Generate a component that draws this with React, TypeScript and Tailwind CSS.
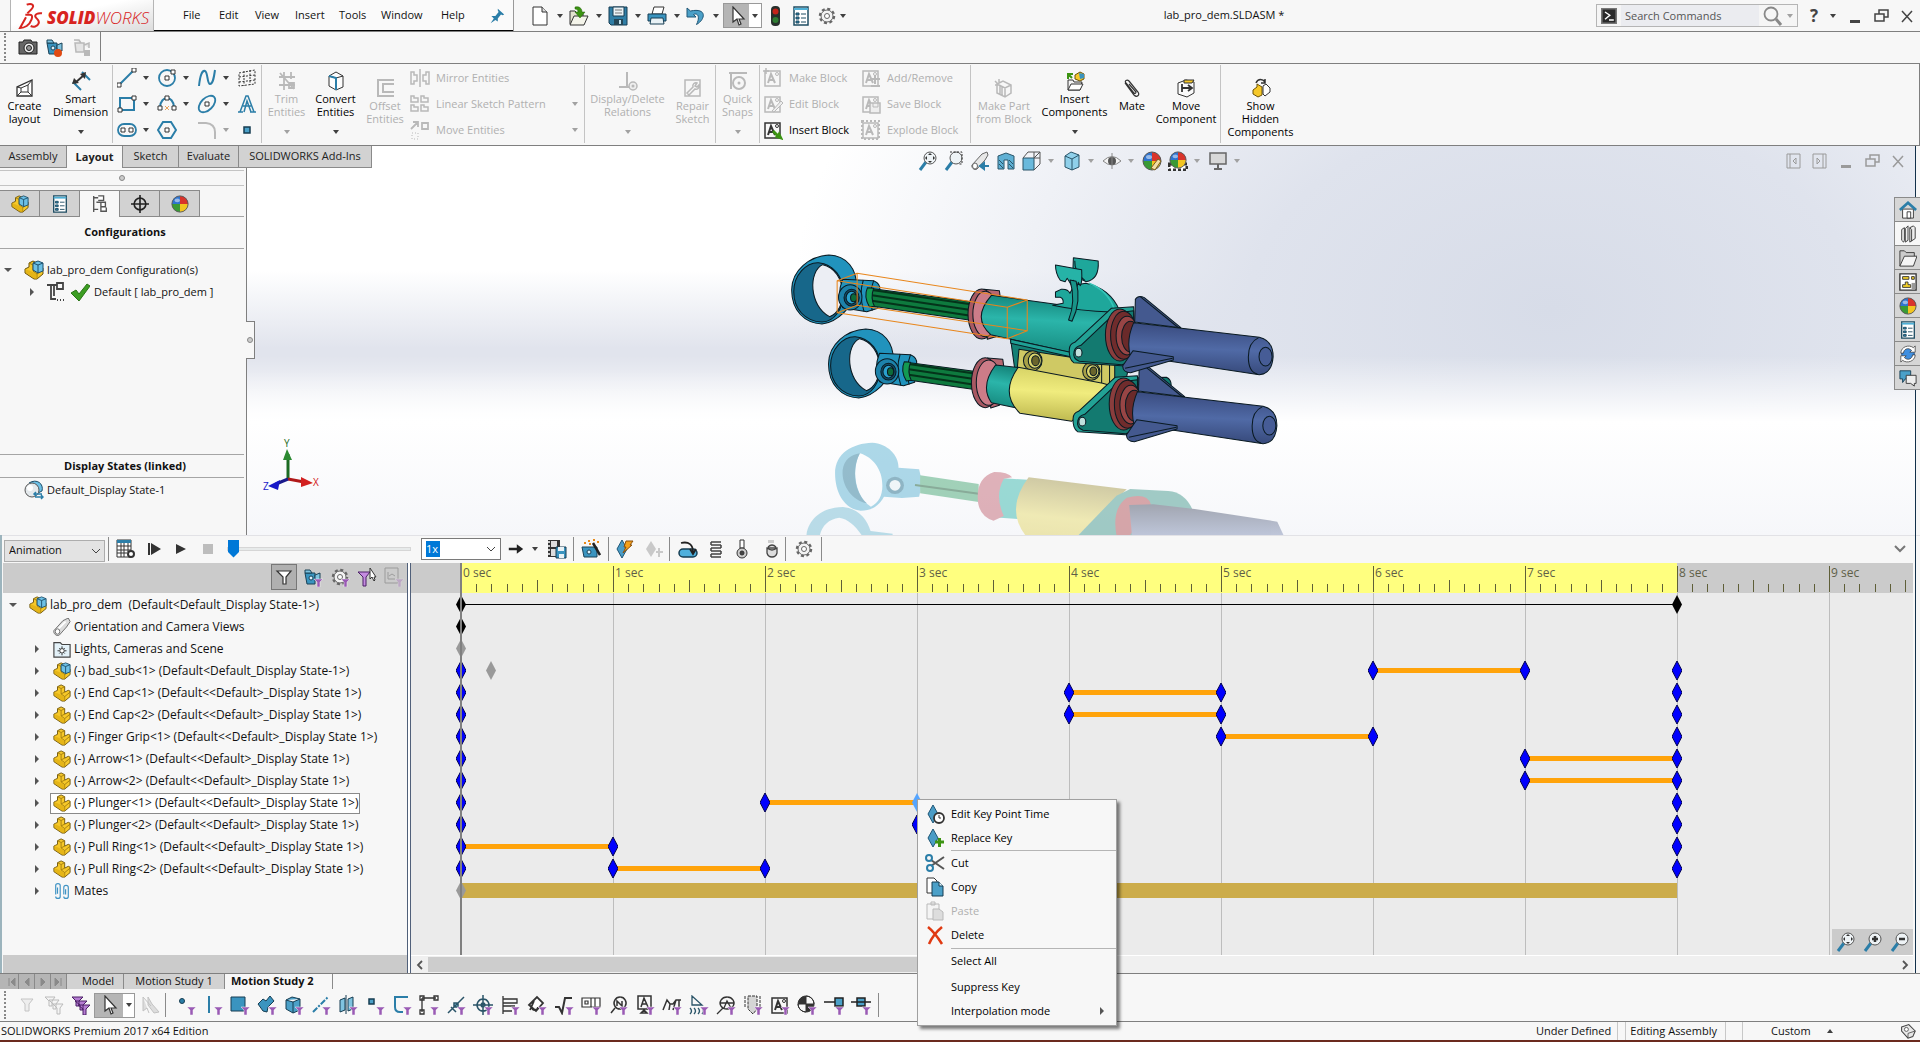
import React from 'react';

const B = '#2b7ea8';
const K = '#333';
const G = '#b9b9b9';
const P = '#9a5bb5';

const partCube = (
  <>
    <path d="M3 8l2-1V3l4-2 4 2v6l4-2 2 1v6l-6 5h-3l-9-6V9z" fill="#f6c829" stroke="#6b5208" />
    <path d="M9 5l-4-2M9 5l4-2M9 5v6l4-2M9 11l4 3v5M13 14l6-5" fill="none" stroke="#a07c10" />
    <path d="M1 9l8 3 4 3v4h-2l-9-6z" fill="#dba90c" opacity=".6" />
  </>
);

const asm = (
  <>
    {partCube}
    <path d="M9 3l5-2 5 2v8l-5 2-5-3z" fill="#6cc0e6" stroke="#1d4f6b" />
    <path d="M9 3l5 2 5-2M14 5v8" fill="none" stroke="#1d4f6b" />
  </>
);

const ball = (
  <>
    <path d="M10 1a9 9 0 0 1 9 9h-9z" fill="#d9342b" />
    <path d="M19 10a9 9 0 0 1-9 9v-9z" fill="#f2c521" />
    <path d="M10 19a9 9 0 0 1-9-9h9z" fill="#3a9a35" />
    <path d="M1 10a9 9 0 0 1 9-9v9z" fill="#2f74d0" />
    <ellipse cx="7" cy="6" rx="3" ry="2" fill="#fff" opacity=".5" />
    <circle cx="10" cy="10" r="9" fill="none" stroke="#555" />
  </>
);

const camcorder = (
  <>
    <path d="M2 6h10v11H4z" fill="#3a94bf" stroke="#1b4257" />
    <path d="M2 3h5l2 3H2zM12 8l5-2v8l-5-2z" fill="#7fc3e0" stroke="#1b4257" />
    <circle cx="8" cy="11" r="2" fill="#dff3fc" stroke="#1b4257" />
  </>
);

const glass = (
  <>
    <path d="M2 19l6-8" stroke={B} strokeWidth="3" />
    <circle cx="12" cy="7" r="6" fill="#eef3f6" stroke="#555" />
  </>
);

const gear = (
  <>
    <circle cx="10" cy="10" r="7" fill="none" stroke="#666" strokeWidth="2.500" strokeDasharray="3 2.500" />
    <circle cx="10" cy="10" r="6" fill="#f3f3f3" stroke="#666" />
    <circle cx="10" cy="10" r="2.500" fill="#fff" stroke="#666" />
  </>
);

const list = (
  <>
    <path d="M3 1h14v18H3z" fill="#fff" stroke="#1f4d63" strokeWidth="1.500" />
    <path d="M3 2h14v2H3z" fill="#4fb0d6" />
    <path d="M5 7h3v2H5zM5 11h3v2H5zM5 15h3v2H5z" fill={B} stroke="#1f4d63" />
    <path d="M10 8h5M10 12h5M10 16h5" stroke="#1f4d63" />
  </>
);

const cursor = <path d="M6 1v15l4-3 2 6 2-1-2-5h5z" fill="#fff" stroke={K} strokeWidth="1.200" />;

const key = <path d="M8 1l5 9-5 9-5-9z" fill="#4a9cc6" stroke="#1f5676" />;

const blockA = (c: string) => (
  <>
    <path d="M2 3h15v15H2z" fill="none" stroke={c} strokeWidth="1.500" />
    <path d="M5 15l3-9 4 9M6 12h5" fill="none" stroke={c} strokeWidth="2" />
    <circle cx="14" cy="6" r="1.500" fill="none" stroke={c} />
  </>
);

const icons: Record<string, React.ReactNode> = {
  asm,
  part: partCube,
  ball,
  camcorder,
  gear,
  list,
  cursor,
  pin: <path d="M11 1l8 7-2 1-2-1-4 5v4l-3-2-6 4 4-6-3-3h5l4-5-1-2z" fill={B} />,
  doc: (
    <>
      <path d="M3 1h9l5 5v13H3z" fill="#fff" stroke={K} />
      <path d="M12 1v5h5" fill="#ddd" stroke={K} />
    </>
  ),
  open: (
    <>
      <path d="M1 18V5h5l2 2h6v3" fill="#e3e3cf" stroke={K} />
      <path d="M1 19l4-9h14l-4 9z" fill="#f4f4ea" stroke={K} />
      <path d="M6 1c4-1 7 1 7 5h3l-5 6-5-6h3c0-2-1-3-3-3z" fill="#3c9412" stroke="#23600a" strokeWidth=".5" />
    </>
  ),
  save: (
    <>
      <path d="M1 1h18v18H3l-2-2z" fill="#2f7ea6" stroke="#163d52" />
      <path d="M5 1h11v9H5z" fill="#e9f2f6" stroke="#163d52" />
      <path d="M7 4h7M7 7h7" stroke="#777" />
      <path d="M6 13h9v6H6z" fill="#264757" />
      <path d="M11 14h2v4h-2z" fill="#bfe0ee" />
    </>
  ),
  print: (
    <>
      <path d="M5 8l2-7h10l-2 7z" fill="#fff" stroke={K} />
      <path d="M1 8h18v7H1z" fill="#3a94bf" stroke="#163d52" />
      <path d="M4 12h12l1 6H3z" fill="#e8f1f5" stroke="#163d52" />
    </>
  ),
  undo: <path d="M1 2v9h9L7.500 8.500c4-2 7 2 3 10 9-5 11-17-6-13.500z" fill="#4ba0c8" stroke="#1f5676" />,
  light: (
    <>
      <rect x="6" y="0" width="9" height="20" rx="4" fill="#27302c" />
      <circle cx="10.500" cy="5.500" r="3" fill="#c4241a" />
      <circle cx="10.500" cy="14" r="3" fill="#2f7d32" />
    </>
  ),
  search: (
    <>
      <circle cx="8" cy="8" r="6.500" fill="none" stroke="#888" strokeWidth="1.800" />
      <path d="M13 13l5 6" stroke="#888" strokeWidth="3" />
    </>
  ),
  prompt: (
    <>
      <path d="M1 1h18v18H1z" fill="#2a2a2a" stroke="#777" strokeWidth="2" />
      <path d="M5 5l6 4-6 5M10 15h6" fill="none" stroke="#fff" strokeWidth="1.800" />
    </>
  ),
  min: <path d="M5 14h10v3H5z" fill="currentColor" />,
  restore: <path d="M8 8V4h9v7h-4M4 8h9v7H4z" fill="none" stroke="currentColor" strokeWidth="1.500" />,
  close: <path d="M5 5l10 11M15 5L5 16" stroke="currentColor" strokeWidth="1.500" />,
  paneL: <path d="M3 3h13v14H3zM6 3v14M12 7l-3 3 3 3z" fill="none" stroke="currentColor" />,
  paneR: <path d="M3 3h13v14H3zM13 3v14M7 7l3 3-3 3z" fill="none" stroke="currentColor" />,
  camera: (
    <>
      <path d="M1 5h4l1-2h7l1 2h5v12H1z" fill="#666" stroke="#222" />
      <circle cx="11" cy="11" r="5" fill="#eee" stroke="#222" />
      <circle cx="11" cy="11" r="2.500" fill="#999" stroke="#222" />
    </>
  ),
  record: (
    <>
      {camcorder}
      <circle cx="13" cy="16" r="4" fill="#e04a13" />
    </>
  ),
  recStop: (
    <>
      <path d="M3 6h9v9H4zM2 3h5l2 3M12 8l5-2v5" fill="#e4e4e4" stroke={G} strokeWidth="1.500" />
      <path d="M12 13h6v6h-6z" fill={G} />
    </>
  ),
  layout: (
    <>
      <path d="M2 18V9l15-7v16z" fill="#fff" stroke={K} strokeWidth="1.300" />
      <path d="M6 14v-4l7-3v7zM2 18l4-4M17 18l-4-4M2 9l4 1M17 2l-4 5" fill="none" stroke={K} />
    </>
  ),
  smart: (
    <>
      <path d="M10 19l-8-8M19 9l-8-8" stroke={B} strokeWidth="2" />
      <path d="M4 12L13 4" stroke={K} strokeWidth="2" />
      <path d="M1 13l2-6 5 5zM15 1L9 3l5 5z" fill={K} />
    </>
  ),
  line: (
    <>
      <path d="M2 17L17 2" stroke={B} strokeWidth="2" />
      <path d="M0 15h4v4H0zM15 0h4v4h-4z" fill="#fff" stroke={K} />
    </>
  ),
  circle: (
    <>
      <circle cx="10" cy="10" r="8" fill="none" stroke={B} strokeWidth="1.800" />
      <path d="M8 8h4v4H8zM14 2h4v4h-4z" fill="#fff" stroke={K} />
    </>
  ),
  spline: <path d="M2 18C3 8 5 2 8 3s2 13 5 13 4-7 5-14" fill="none" stroke={B} strokeWidth="2" />,
  plane: <path d="M2 5l16-3v14L2 18zM7 3v15M13 2v15M2 9l16-2M2 14l16-2" fill="none" stroke={K} strokeDasharray="2 1.500" />,
  rect: (
    <>
      <path d="M3 4h14v12H3z" fill="none" stroke={B} strokeWidth="2" />
      <path d="M1 14h4v4H1zM15 2h4v4h-4z" fill="#fff" stroke={K} />
    </>
  ),
  arc: (
    <>
      <path d="M3 13C4 1 16 1 17 13" fill="none" stroke={B} strokeWidth="2" />
      <path d="M1 12h4v4H1zM15 12h4v4h-4zM8 2h4v4H8z" fill="#fff" stroke={K} />
      <path d="M8 12l4 4M12 12l-4 4" stroke="#e8a25a" />
    </>
  ),
  ellipse: (
    <>
      <ellipse cx="10" cy="10" rx="10" ry="6" transform="rotate(-45 10 10)" fill="none" stroke={B} strokeWidth="1.800" />
      <path d="M8 8h4v4H8z" fill="#fff" stroke={K} />
    </>
  ),
  text: <path d="M1 18h5M13 18h6M3 18L9 2h2l6 16M6 12h8M7 18l3-11 4 11" fill="none" stroke={B} strokeWidth="1.500" />,
  slot: (
    <>
      <rect x="1" y="4" width="18" height="12" rx="6" fill="none" stroke={B} strokeWidth="1.800" />
      <path d="M4 8h4v4H4zM12 8h4v4h-4z" fill="#fff" stroke={K} />
    </>
  ),
  hexagon: (
    <>
      <path d="M6 2h8l5 8-5 8H6l-5-8z" fill="none" stroke={B} strokeWidth="2" />
      <path d="M8 8h4v4H8z" fill="#fff" stroke={K} />
    </>
  ),
  fillet: <path d="M1 3h8q9 1 9 9v7" fill="none" stroke={G} strokeWidth="2" />,
  point: <path d="M7 7h6v6H7z" fill="#4ba0c8" stroke="#163d52" strokeWidth="1.500" />,
  trim: <path d="M2 6h16M2 14h16M7 1v18M14 1v7M3 2l14 16M12 12h5v5h-5z" fill="none" stroke={G} strokeWidth="1.800" />,
  convert: (
    <>
      <path d="M3 5l7-4 7 4v11l-7 3-7-4z" fill="#fdfdfd" stroke={K} />
      <path d="M3 5l7 2 7-2M10 7v12" fill="none" stroke={K} />
      <path d="M3 5l7 2v12" fill="none" stroke={B} strokeWidth="2" />
    </>
  ),
  offset: <path d="M19 2H3v16h16M19 6H8v8h11" fill="none" stroke={G} strokeWidth="2" />,
  mirror: <path d="M10 1v18M1 4l3 0v3h3v6H4v3H1zM19 4h-3v3h-3v6h3v3h3z" fill="none" stroke={G} strokeWidth="1.500" />,
  pattern: <path d="M1 2h3v2h4v4H1zM11 2h3v2h4v4h-7zM1 11h3v2h4v4H1zM11 11h3v2h4v4h-7z" fill="none" stroke={G} strokeWidth="1.500" />,
  move: (
    <>
      <path d="M1 9l7-7M3 2h5v5M12 3h6v6h-6z" fill="none" stroke={G} strokeWidth="1.800" />
      <path d="M2 13h6v6H2z" fill="none" stroke={G} strokeDasharray="1 2" />
    </>
  ),
  relations: (
    <>
      <path d="M9 1v15M1 16h11" stroke={G} strokeWidth="2" />
      <circle cx="15" cy="15" r="4" fill="#eee" stroke={G} strokeWidth="1.500" />
      <circle cx="15" cy="15" r="1.500" fill={G} />
    </>
  ),
  repair: <path d="M2 2h15v16H2zM4 15l6-6c-1-3 2-5 4-4l-2 3 2 1 2-2c1 3-2 5-4 4l-6 6z" fill="none" stroke={G} strokeWidth="1.500" />,
  snaps: (
    <>
      <path d="M1 2h18M3 2v16" stroke={G} strokeWidth="2" />
      <circle cx="11" cy="12" r="6" fill="none" stroke={G} strokeWidth="2" />
      <circle cx="11" cy="12" r="1.500" fill={G} />
    </>
  ),
  blockNew: (
    <>
      {blockA(G)}
      <path d="M0 3h6M3 0v6" stroke={G} strokeWidth="1.500" />
    </>
  ),
  blockEdit: (
    <>
      {blockA(G)}
      <path d="M9 17l9-10 2 2-9 9z" fill="#eee" stroke={G} />
    </>
  ),
  blockAdd: (
    <>
      {blockA(G)}
      <path d="M10 11h9M14 7v9M10 18h9" stroke={G} strokeWidth="2" />
    </>
  ),
  blockSave: (
    <>
      {blockA(G)}
      <path d="M9 9h10v10H9z" fill="#eee" stroke={G} strokeWidth="1.500" />
      <path d="M12 9v4h5V9" fill="none" stroke={G} />
    </>
  ),
  blockExplode: (
    <>
      {blockA(G)}
      <path d="M1 1h17v18H1z" fill="none" stroke={G} strokeWidth="2" strokeDasharray="2 2" />
    </>
  ),
  blockIns: (
    <>
      {blockA(K)}
      <path d="M11 11l4 4 1-2 3 6-6-2 1-1-4-4z" fill="#3c9412" stroke="#3c9412" strokeWidth="1.500" />
    </>
  ),
  makePart: <path d="M3 6l6-3 8 4v8l-6 4-8-4zM3 6l8 4 6-3M11 10v9M6 8v8M8 9v8M1 3l3 3M5 1v4M1 7h3" fill="none" stroke={G} strokeWidth="1.500" />,
  insComp: (
    <>
      <path d="M3 18V9h5l1 2h8l-2 8H3z" fill="#f4f4f4" stroke={K} />
      <path d="M3 19l3-6h12l-3 6z" fill="#fff" stroke={K} />
      <path d="M3 8V3h5M3 3l4 4" stroke="#3c9412" strokeWidth="2" fill="none" />
      <path d="M10 4l5-3 4 2v5l-4 2-5-2z" fill="#f6c829" stroke="#6b5208" />
      <path d="M14 2l5 1v4l-4 1z" fill="#3a94bf" />
    </>
  ),
  clip: <path d="M3 5l9 12c3 3 6 0 4-3L7 3C5 1 2 3 4 5l8 10c1 1 2 0 2-1L7 6" fill="none" stroke={K} strokeWidth="1.200" />,
  moveComp: (
    <>
      <path d="M2 5l8-3 8 2v11l-7 4-9-3z" fill="#fafafa" stroke={K} />
      <path d="M8 2h10l-2 3H8z" fill="#f6c829" stroke={K} />
      <path d="M6 10h9M12 7l4 3-4 3M6 6v8" fill="none" stroke={K} strokeWidth="1.800" />
    </>
  ),
  showHidden: (
    <>
      <path d="M2 12l4-3v-3l5 3v8l-4 2-5-3z" fill="#f6c829" stroke="#6b5208" />
      <path d="M12 8l3-2 4 4v4l-5 4-2-2z" fill="#fff" stroke={K} />
      <path d="M5 5c2-5 7-4 9-1M14 1v4h-4" fill="none" stroke={K} strokeWidth="1.500" />
    </>
  ),
  zoomFit: (
    <>
      {glass}
      <path d="M12 2l2 2h-4zM12 12l2-2h-4zM7 7l2-2v4zM17 7l-2-2v4z" fill={K} />
    </>
  ),
  zoomIn: (
    <>
      {glass}
      <path d="M12 4v6M9 7h6" stroke={K} strokeWidth="2.500" />
    </>
  ),
  zoomOut: (
    <>
      {glass}
      <path d="M9 7h6" stroke={K} strokeWidth="2.500" />
    </>
  ),
  zoomArea: (
    <>
      {glass}
      <path d="M6 1h12v12h-4" fill="none" stroke={K} strokeDasharray="2 1.500" />
    </>
  ),
  prevView: (
    <>
      <path d="M2 14L12 3l5-2 1 3-3 5-8 9c-3 2-6-2-5-4z" fill="#e7e7e7" stroke="#666" />
      <ellipse cx="5" cy="15" rx="2.500" ry="3" fill="#fff" stroke="#666" />
      <path d="M19 15h-6M14 12l-4 3 4 3z" stroke={B} fill={B} strokeWidth="2" />
    </>
  ),
  telescope: (
    <>
      <path d="M1 14L11 3l6-3 2 4-4 6-8 9c-3 2-7-2-6-5z" fill="#dcdcdc" stroke="#666" />
      <path d="M5 13l9-9" stroke="#fff" strokeWidth="2" />
      <ellipse cx="5" cy="15" rx="2.500" ry="3" fill="#fff" stroke="#666" />
    </>
  ),
  section: (
    <>
      <path d="M2 5l8-3 8 3v13h-6V9H8v9H2z" fill="#5fb0d4" stroke="#2a5468" />
      <path d="M3 9l4 4M3 13l4 4M13 9l4 4M13 13l4 4" stroke="#2a5468" />
    </>
  ),
  viewOrient: (
    <>
      <path d="M1 7h11v12H1z" fill="#6ab9dc" stroke="#2a5468" />
      <path d="M1 7l5-6h12v12l-6 6M12 7l6-6M12 1v6M18 7h-6" fill="none" stroke="#555" />
    </>
  ),
  display: (
    <>
      <path d="M3 5l6-4 8 3v12l-7 3-7-3z" fill="#8fd0ea" stroke="#2a5468" />
      <path d="M3 5l7 3 7-4M10 8v11" fill="none" stroke="#2a5468" />
    </>
  ),
  eye: (
    <>
      <path d="M1 10q9-9 18 0q-9 8-18 0z" fill="#f3f3f3" stroke="#888" />
      <circle cx="10" cy="10" r="4" fill="#555" />
      <path d="M10 2v16" stroke="#888" />
    </>
  ),
  ballEdit: (
    <>
      {ball}
      <path d="M9 17l7-9 3 2-6 9z" fill="#f3dfa5" stroke="#7a5d1c" />
    </>
  ),
  ballScene: (
    <>
      <path d="M1 13h18v6H1z" fill="#fff" stroke="#333" strokeDasharray="3 2" strokeWidth="3" />
      <g transform="translate(1 0) scale(.9)">{ball}</g>
    </>
  ),
  monitor: (
    <>
      <path d="M2 2h16v11H2z" fill="#d8d8d8" stroke="#666" strokeWidth="1.500" />
      <path d="M10 13v4M6 18h8" stroke="#666" strokeWidth="2" />
    </>
  ),
  config: <path d="M3 1v18M3 3h5M3 16h5M8 1l6 0v5H8M11 8h5v5h-5zM6 8l5 0M11 14v4h6v-4" fill="#fff" stroke="#555" strokeWidth="1.500" />,
  target: (
    <>
      <circle cx="10" cy="10" r="6.500" fill="none" stroke="#222" strokeWidth="1.800" />
      <path d="M10 0v20M0 10h20" stroke="#222" strokeWidth="1.800" />
    </>
  ),
  confItem: <path d="M1 3h10M5 3v14h5M8 3v11M11 1h6v6h-6zM11 18h1M14 18h1M17 18h1" fill="none" stroke="#444" strokeWidth="1.800" />,
  check: <path d="M1 11l5-3 3 4 8-10 3 2L9 19z" fill="#3c9e22" stroke="#2a7416" />,
  displayState: (
    <>
      <path d="M5 3c8-5 15 1 13 8l-4 2" fill="#6cc0e6" stroke="#1d4f6b" />
      <circle cx="8" cy="10" r="7" fill="#e4e9ec" stroke="#555" />
      <ellipse cx="6" cy="8" rx="3" ry="3" fill="#fff" />
      <path d="M11 14h7M11 17h7M12 12l-2 2 2 2M17 15l2 2-2 2" fill="none" stroke={B} strokeWidth="1.500" />
    </>
  ),
  home: (
    <>
      <path d="M4 9h12v10H4z" fill="#fff" stroke={K} />
      <path d="M9 12h4v7H9z" fill="#fff" stroke={K} />
      <path d="M1 10l9-8 9 8" fill="none" stroke="#2b7ea8" strokeWidth="3" />
    </>
  ),
  books: <path d="M3 5l3-2v14l-1 2-2-2zM7 4l3-3v16l-3 2zM12 3l4-2 2 2v12l-6 4zM12 3l2 2v13" fill="#eee" stroke={K} />,
  folder: (
    <>
      <path d="M1 19V2h5l2 2h9v4" fill="#ccc" stroke={K} />
      <path d="M1 19L6 8h14l-4 11z" fill="#f5f5f5" stroke={K} />
    </>
  ),
  palette: (
    <>
      <path d="M1 1h18v18H1z" fill="#fff" stroke={K} strokeWidth="1.500" />
      <path d="M4 4h7v3H4zM14 4h3v3h-3zM4 16v-3h3v-3h3v3h3v3z" fill="#f6d229" stroke={K} />
      <path d="M14 11h4v7h-4z" fill="#999" />
    </>
  ),
  globe: (
    <>
      <circle cx="10" cy="10" r="7" fill="#3f8fe0" stroke="#1d4f8b" />
      <path d="M2 9C2 2 11-1 16 3l2-2v7h-6l2-2c-4-4-9-1-9 3zM18 11c0 7-9 10-14 6l-2 2v-7h6l-2 2c4 4 9 1 9-3z" fill="#fff" stroke={K} strokeWidth=".8" />
    </>
  ),
  forum: (
    <>
      <path d="M1 2h12v9H7l-3 4v-4H1z" fill="#4ba0c8" stroke="#163d52" />
      <path d="M8 7h11v9h-2v3l-4-3H8z" fill="#eee" stroke={K} />
    </>
  ),
  calc: (
    <>
      <path d="M1 1h14v17H1z" fill="#fff" stroke={K} />
      <path d="M1 1h14v3H1z" fill={B} />
      <path d="M5 4v14M8 4v14M12 4v9M1 7h14M1 11h14M1 14h10" stroke={K} />
      <circle cx="15" cy="15" r="3" fill="#fff" stroke={K} strokeWidth="2" />
    </>
  ),
  playStart: <path d="M4 4h2v12H4zM7 4l10 6-10 6z" fill="#333" />,
  play: <path d="M5 5l10 5-10 5z" fill="#333" />,
  stop: <path d="M5 5h10v10H5z" fill="#bdbdbd" />,
  arrow: <path d="M1 8.500h10V4l8 6-8 6v-4.500H1z" fill="#222" />,
  film: (
    <>
      <path d="M1 1h12v17H1z" fill="#333" />
      <path d="M4 2h6v6H4zM4 10h6v7H4z" fill="#ddd" />
      <path d="M1 3h2M1 7h2M1 11h2M1 15h2" stroke="#fff" strokeWidth="1.500" />
      <path d="M9 8h10v11H9z" fill="#3a94bf" stroke="#163d52" />
      <path d="M11 8h6v4h-6zM12 15h5v4h-5z" fill="#e9f2f6" />
    </>
  ),
  wizard: (
    <>
      <path d="M1 8h15v10H3z" fill="#3a94bf" stroke="#1b4257" />
      <circle cx="8" cy="13" r="2" fill="#dff3fc" stroke="#1b4257" />
      <path d="M12 4l7 12" stroke="#222" strokeWidth="2.500" />
      <path d="M3 4h2M7 2h2M12 1h2M8 5h2M16 3h2" stroke="#e88a1a" strokeWidth="2" />
    </>
  ),
  autoKey: (
    <>
      {key}
      <path d="M12 2h7l-3 4h2l-9 8 3-6h-2z" fill="#f5a11b" stroke="#8a4f08" />
    </>
  ),
  addKey: <path d="M7 2l5 8-5 8-5-8zM12 12h2v-3h2v3h3v2h-3v4h-2v-4h-2z" fill="#c9c9c9" />,
  motor: (
    <>
      <rect x="1" y="10" width="18" height="8" rx="4" fill="#4fb0dc" stroke="#163d52" strokeWidth="1.500" />
      <path d="M3 4c8-2 12 2 12 9M12 10l3 5 3-5" fill="none" stroke="#222" strokeWidth="1.800" />
    </>
  ),
  spring: <path d="M5 3h10M5 6h10M5 9h10M5 12h10M5 15h10M5 18h10M5 3v3M15 6v3M5 9v3M15 12v3M5 15v3" stroke="#444" strokeWidth="1.500" />,
  contact: (
    <>
      <path d="M8 1h4v8H8z" fill="#fff" stroke={K} />
      <circle cx="10" cy="14" r="5" fill="#ccc" stroke={K} />
      <circle cx="10" cy="14" r="2" fill="#444" stroke={K} />
    </>
  ),
  gravity: (
    <>
      <path d="M6 1h6v3H6z" fill="#ccc" />
      <path d="M5 9h10v5q-1 4-5 4t-5-4zM5 9q5 4 10 0M6 8q4-4 8 0" fill="#ddd" stroke="#444" strokeWidth="1.300" />
    </>
  ),
  funnel: <path d="M3 4h14l-5 6v7H9v-7z" fill="#fff" stroke={K} strokeWidth="1.200" />,
  lights: (
    <>
      <path d="M1 3h7l2 2h9v14H1z" fill="#e3f1f8" stroke="#444" strokeWidth="1.300" />
      <circle cx="10" cy="12" r="2.500" fill="#fff" stroke="#222" />
      <path d="M10 7v2M10 15v2M5 12h2M13 12h2M7 9l1 1M13 15l-1-1M13 9l-1 1M7 15l1-1" stroke="#222" />
    </>
  ),
  mates: <path d="M3 14V4c0-3 5-3 5 0v12c0 3-5 3-5 0M5 13V6M12 14V6c0-3 5-3 5 0v10c0 3-5 3-5 0M14 14V8" fill="none" stroke="#3f93c4" strokeWidth="1.300" />,
  keyTime: (
    <>
      {key}
      <circle cx="14" cy="14" r="5" fill="#fff" stroke={K} strokeWidth="1.800" />
      <path d="M14 11v3h2" fill="none" stroke={K} />
    </>
  ),
  keyAdd: (
    <>
      {key}
      <path d="M10 14h9M14.500 10v9" stroke="#3c9412" strokeWidth="3" />
    </>
  ),
  cut: (
    <>
      <path d="M6 7l13 9M6 13l13-9" stroke="#555" strokeWidth="2" />
      <circle cx="4" cy="5" r="3" fill="none" stroke={B} strokeWidth="2" />
      <circle cx="5" cy="15" r="3" fill="none" stroke={B} strokeWidth="2" />
    </>
  ),
  copy: (
    <>
      <path d="M2 1h7l3 3v12H2z" fill="#fff" stroke={K} />
      <path d="M7 5h7l4 4v10H7z" fill="#4ba0c8" stroke="#163d52" />
      <path d="M14 5v4h4" fill="#dff3fc" stroke="#163d52" />
    </>
  ),
  paste: (
    <>
      <path d="M2 3h12v15H2zM6 1h4v3H6z" fill="#f4f4f4" stroke={G} />
      <path d="M8 8h6l4 3v8H8z" fill="#ddd" stroke={G} />
    </>
  ),
  del: <path d="M3 2c5 4 9 9 14 17M17 2C11 7 7 12 4 19" fill="none" stroke="#e03a12" strokeWidth="2.500" />,
  tag: (
    <>
      <path d="M2 5l9-3 8 8-3 7-6 2-8-9z" fill="#e8e8e8" stroke="#444" strokeWidth="1.300" />
      <circle cx="8" cy="8" r="2.500" fill="#fff" stroke="#444" />
      <path d="M10 19v-6l9-3" fill="none" stroke="#444" />
    </>
  ),
  selGray: <path d="M3 2v14l4-3 2 5M8 2v8l6 8 5-1-7-8zM3 2l8 9" fill="#ddd" stroke="#c2c2c2" />,
  filterOff: <path d="M4 4h12l-4 5v7H8V9z" fill="#eee" stroke="#c4c4c4" />,
  filterStackOff: <path d="M1 2h10L8 6v5H5V6zM5 5h10l-3 4v5H9V9zM9 9h10l-3 4v6h-3v-6z" fill="#f4f4f4" stroke="#bbb" />,
  filterStack: <path d="M1 2h11L8 6v5H5V6zM4 6h12l-4 4v5H9v-5zM7 10h12l-4 4v6h-3v-6z" fill="#b57cd2" stroke="#4b1f66" />,
};

// glyphs of the selection-filter toolbar; each one gets the purple funnel badge
const filterGlyphs: React.ReactNode[] = [
  <circle cx="6" cy="6" r="2.500" fill={B} stroke="#163d52" />,
  <path d="M6 1v17" stroke={B} strokeWidth="2" />,
  <path d="M1 2h14v14H1z" fill="#3a94bf" stroke="#163d52" />,
  <path d="M1 9l5-5 3 2 4-5 4 5-6 6-1 5-4-1z" fill="#3a94bf" stroke="#163d52" />,
  <path d="M2 5l6-3 8 2v11l-7 3-7-4zM2 5l7 2 7-3M9 7v11" fill="#4ba0c8" stroke="#163d52" />,
  <path d="M2 17L17 2" stroke={B} strokeWidth="2" strokeDasharray="6 1.500 2 1.500" />,
  <path d="M2 5l5-2v12l-5 2zM10 4l5-2v12l-5 2zM8 0v19" fill="#7fc3e0" stroke="#163d52" />,
  <path d="M4 4h5v5H4z" fill="#4ba0c8" stroke="#163d52" strokeWidth="1.500" />,
  <path d="M16 2H3v10q0 5 5 5h3" fill="none" stroke={B} strokeWidth="2" />,
  <path d="M3 3h14M3 3v14M1 1h4v4H1zM15 1h4v4h-4zM1 15h4v4H1z" fill="#fff" stroke={K} strokeWidth="1.300" />,
  <path d="M2 18L18 2M5 12l5 5M8 8h4v4H8z" fill="#7fc3e0" stroke="#2a5468" strokeWidth="1.500" />,
  <path d="M10 0v20M0 10h20M10 4a6 6 0 1 0 .1 0M10 8a2 2 0 1 0 .1 0" fill="none" stroke="#2a5468" strokeWidth="1.500" />,
  <path d="M3 1v18M3 4h14v4H3M3 11h12M3 16h9" fill="none" stroke={K} strokeWidth="1.300" />,
  <path d="M2 10L10 2l6 6-7 8zM7 6l-4 9M5 12a3 3 0 1 0 6 0" fill="#fff" stroke={K} strokeWidth="1.800" />,
  <path d="M1 12h4l3 6 3-15h7" fill="none" stroke={K} strokeWidth="2" />,
  <path d="M1 3h18v9H1zM10 3v9M14 3v9M4 6h3v3H4z" fill="#fff" stroke={K} strokeWidth="1.200" />,
  <path d="M3 18l4-5M12 2a6 6 0 1 0 .1 0M9 11V6l5 5V6" fill="none" stroke={K} strokeWidth="1.500" />,
  <path d="M3 1h13v13H3zM6 12l3-9 4 9M7 9h5M6 18h6l-3-3z" fill="none" stroke={K} strokeWidth="1.500" />,
  <path d="M1 15L5 5l3 4h3l3-4h5M8 9l-1 6M14 5l-3 10M17 5v7" fill="none" stroke={K} strokeWidth="1.500" />,
  <path d="M3 1v9h10zM1 13q3 3 0 6M5 13q3 3 0 6M9 13q3 3 0 6M13 13q3 3 0 6" fill="none" stroke="#2a5468" strokeWidth="1.300" />,
  <path d="M1 19l6-6M11 2a7 6 0 1 0 .1 0M4 8h14M8 13l3-7 4 7" fill="none" stroke={K} strokeWidth="1.300" />,
  <path d="M2 1v12M17 1v12M5 1h9v13l-4 5-5-5z" fill="#d5d5d5" stroke={K} strokeDasharray="3 1" />,
  <g>{blockA(K)}</g>,
  <path d="M9 9V1a8 8 0 0 1 8 8zM9 9v8a8 8 0 0 1-8-8zM9 1a8 8 0 1 0 .1 0" fill="#333" fillRule="evenodd" stroke={K} />,
  <path d="M0 7h11M11 3h8v8h-8z" fill="#4ba0c8" stroke="#222" strokeWidth="1.500" />,
  <path d="M0 7h20M6 3h8v8H6z" fill="#4ba0c8" stroke="#222" strokeWidth="1.500" />,
];

const badge = <path d="M11 12h9l-3 3v5h-3v-5z" fill={P} stroke="#f7f7f7" strokeWidth=".5" />;

const Svg = ({ children, size = 'h-5 w-5' }: { children: React.ReactNode; size?: string }) => (
  <svg viewBox="0 0 20 20" fill="none" className={`${size} shrink-0`} aria-hidden="true">
    {children}
  </svg>
);

const Icon = ({ name, size }: { name: string; size?: string }) => <Svg size={size}>{icons[name]}</Svg>;

const Caret = ({ dim, up }: { dim?: boolean; up?: boolean }) => (
  <svg viewBox="0 0 6 4" className={`h-1 w-1.5 shrink-0 ${up ? 'rotate-180' : ''} ${dim ? 'text-neutral-400' : 'text-neutral-700'}`}>
    <path d="M0 0h6L3 4z" fill="currentColor" />
  </svg>
);

const Sep = () => <div className="h-6 w-px shrink-0 bg-[#8a8a8a]" />;

const IconButton = ({ name, label, className = 'w-[27px]' }: { name: string; label: string; className?: string }) => (
  <button type="button" aria-label={label} className={`flex shrink-0 items-center justify-center ${className}`}>
    <Icon name={name} />
  </button>
);

/* ---------- title bar ---------- */

const quick = [
  ['doc', 'New'],
  ['open', 'Open'],
  ['save', 'Save'],
  ['print', 'Print'],
  ['undo', 'Undo'],
];

const TitleBar = () => (
  <header className="flex h-8 shrink-0 items-stretch border-b border-[#7f7f7f]">
    <div className="ml-2.5 flex w-36 items-center border-x border-[#b5b5b5] bg-linear-to-br from-white from-40% to-[#dcdcdc] pl-1">
      <svg viewBox="0 0 70 84" className="h-7 w-8 shrink-0" fill="none" stroke="#d8241f" strokeWidth="6">
        <path d="M22 8c16-6 26 2 14 14L24 34" />
        <path d="M18 38h14c14 0 2 26-10 34-8 5-14 6-20 6l18-32" />
        <path d="M68 34c-14-2-22 4-20 10s14 10 10 20-16 12-24 8" />
      </svg>
      <div className="pt-1 text-[17px] text-[#d8241f] italic">
        <span className="font-extrabold">SOLID</span>
        <span className="font-light">WORKS</span>
      </div>
    </div>
    <nav className="flex w-[360px] items-center border-r border-[#999] bg-[#fafafa] pl-[29px] shadow-[inset_0_-1px_0_#000]">
      <button type="button" className="w-9 text-left">File</button>
      <button type="button" className="w-9 text-left">Edit</button>
      <button type="button" className="w-10 text-left">View</button>
      <button type="button" className="w-11 text-left">Insert</button>
      <button type="button" className="w-[42px] text-left">Tools</button>
      <button type="button" className="w-[60px] text-left">Window</button>
      <button type="button" className="w-12 text-left">Help</button>
      <button type="button" aria-label="Pin menu">
        <Icon name="pin" size="h-4 w-4" />
      </button>
    </nav>
    <div className="flex items-center pl-4">
      {quick.map(([name, label]) => (
        <button key={name} type="button" aria-label={label} className="flex w-[39px] items-center gap-[7px]">
          <Icon name={name} />
          <Caret />
        </button>
      ))}
      <button type="button" aria-label="Select" className="-ml-0.5 flex h-[25px] w-[39px] items-center border border-[#999] bg-white">
        <span className="flex h-full w-[25px] items-center justify-center bg-[#b5b5b5]">
          <Icon name="cursor" />
        </span>
        <span className="flex flex-1 justify-center">
          <Caret />
        </span>
      </button>
      <IconButton name="light" label="Rebuild" className="w-[26px]" />
      <IconButton name="list" label="File properties" className="w-[26px]" />
      <IconButton name="gear" label="Options" className="w-[26px]" />
      <Caret />
    </div>
    <h1 className="flex-1 self-center pl-1.5 text-center">lab_pro_dem.SLDASM *</h1>
    <div className="my-1 flex w-[202px] items-center border border-[#b5b5b5] bg-[#f5f5f5] pl-1">
      <Icon name="prompt" size="h-4 w-4" />
      <input aria-label="Search Commands" placeholder="Search Commands" className="ml-1 h-full w-[138px] bg-[#ebecf0] pl-1 placeholder:text-[#555]" />
      <button type="button" aria-label="Search" className="flex flex-1 items-center justify-center gap-1">
        <Icon name="search" />
        <Caret dim />
      </button>
    </div>
    <div className="flex items-center text-[#444]">
      <button type="button" className="w-8 text-[17px] font-bold">?</button>
      <Caret />
      <IconButton name="min" label="Minimize" className="ml-1.5 w-[26px]" />
      <IconButton name="restore" label="Restore" className="w-[26px]" />
      <IconButton name="close" label="Close" className="w-[26px]" />
    </div>
  </header>
);

/* ---------- command manager ---------- */

interface BigProps {
  icon: string;
  lines: string[];
  width: string;
  disabled?: boolean;
  caret?: boolean;
}

const Big: React.FC<BigProps> = ({ icon, lines, width, disabled, caret }) => (
  <button
    type="button"
    disabled={disabled}
    className={`flex shrink-0 flex-col items-center leading-[13px] ${width} ${caret ? 'pt-1.5' : 'pt-[13px]'} ${disabled ? 'text-[#b0b0b0]' : 'text-black'}`}
  >
    <Icon name={icon} />
    <span className="mt-px whitespace-pre-line">{lines.join('\n')}</span>
    {caret && (
      <span className="mt-3 flex">
        <Caret dim={disabled} />
      </span>
    )}
  </button>
);

const Small = ({ icon, label, disabled = true, caret }: { icon: string; label: string; disabled?: boolean; caret?: boolean }) => (
  <button type="button" disabled={disabled} className={`flex h-[26px] items-center gap-1.5 ${disabled ? 'text-[#b0b0b0]' : 'text-black'}`}>
    <Icon name={icon} />
    <span className="flex-1 text-left">{label}</span>
    {caret && <Caret dim />}
  </button>
);

const Group = ({ children }: { children: React.ReactNode }) => (
  <div className="my-0.5 flex shrink-0 items-start border-r border-[#c4c4c4]">{children}</div>
);

const sketchTools: [string, string, boolean][] = [
  ['line', 'Line', true],
  ['circle', 'Circle', true],
  ['spline', 'Spline', true],
  ['plane', 'Plane', false],
  ['rect', 'Rectangle', true],
  ['arc', 'Arc', true],
  ['ellipse', 'Ellipse', true],
  ['text', 'Text', false],
  ['slot', 'Slot', true],
  ['hexagon', 'Polygon', false],
  ['fillet', 'Fillet', true],
  ['point', 'Point', false],
];

const Ribbon = () => (
  <section className="-mt-px flex h-[83px] shrink-0 border-r border-b border-[#7f7f7f]">
    <Group>
      <Big icon="layout" lines={['Create', 'layout']} width="w-[49px]" />
      <Big icon="smart" lines={['Smart', 'Dimension']} width="w-[63px]" caret />
    </Group>
    <Group>
      <div className="grid w-[148px] grid-cols-[40px_40px_40px_20px] pl-1">
        {sketchTools.map(([name, label, caret]) => (
          <button key={name} type="button" aria-label={label} className="flex h-[26px] items-center gap-1.5">
            <Icon name={name} />
            {caret && <Caret dim={name === 'fillet'} />}
          </button>
        ))}
      </div>
    </Group>
    <Group>
      <Big icon="trim" lines={['Trim', 'Entities']} width="w-[49px]" disabled caret />
      <Big icon="convert" lines={['Convert', 'Entities']} width="w-[49px]" caret />
      <Big icon="offset" lines={['Offset', 'Entities']} width="w-[50px]" disabled />
      <div className="flex w-[174px] flex-col pr-1.5">
        <Small icon="mirror" label="Mirror Entities" />
        <Small icon="pattern" label="Linear Sketch Pattern" caret />
        <Small icon="move" label="Move Entities" caret />
      </div>
    </Group>
    <Group>
      <Big icon="relations" lines={['Display/Delete', 'Relations']} width="w-[85px]" disabled caret />
      <Big icon="repair" lines={['Repair', 'Sketch']} width="w-[45px]" disabled />
    </Group>
    <Group>
      <Big icon="snaps" lines={['Quick', 'Snaps']} width="w-[43px]" disabled caret />
    </Group>
    <Group>
      <div className="flex w-[98px] flex-col pl-[3px]">
        <Small icon="blockNew" label="Make Block" />
        <Small icon="blockEdit" label="Edit Block" />
        <Small icon="blockIns" label="Insert Block" disabled={false} />
      </div>
      <div className="flex w-28 flex-col pl-[3px]">
        <Small icon="blockAdd" label="Add/Remove" />
        <Small icon="blockSave" label="Save Block" />
        <Small icon="blockExplode" label="Explode Block" />
      </div>
    </Group>
    <Group>
      <Big icon="makePart" lines={['Make Part', 'from Block']} width="w-[66px]" disabled />
      <Big icon="insComp" lines={['Insert', 'Components']} width="w-[75px]" caret />
      <Big icon="clip" lines={['Mate']} width="w-10" />
      <Big icon="moveComp" lines={['Move', 'Component']} width="w-[68px]" />
    </Group>
    <div className="my-0.5 flex items-start">
      <Big icon="showHidden" lines={['Show', 'Hidden', 'Components']} width="w-[79px]" />
    </div>
  </section>
);

/* ---------- left configuration panel ---------- */

const Expander = ({ open }: { open?: boolean }) => (
  <svg viewBox="0 0 8 8" className="h-2 w-2 shrink-0" fill="#555">
    {open ? <path d="M0 2h8L4 6z" /> : <path d="M2 0l4 4-4 4z" />}
  </svg>
);

const cmdTabs: [string, string][] = [
  ['Assembly', 'w-[67px]'],
  ['Layout', 'w-[56px]'],
  ['Sketch', 'w-[56px]'],
  ['Evaluate', 'w-[60px]'],
  ['SOLIDWORKS Add-Ins', 'w-[133px]'],
];

const panelTabs = ['asm', 'list', 'config', 'target', 'ball'];

const ConfigPanel = () => (
  <aside className="relative z-10 flex w-[247px] shrink-0 flex-col">
    <div className="flex h-[22px] w-max shrink-0 text-[#222]">
      {cmdTabs.map(([label, width]) => (
        <button
          key={label}
          type="button"
          className={`${width} border-r border-[#8a8a8a] whitespace-nowrap ${label === 'Layout' ? 'bg-[#f7f7f7] font-bold' : 'border-b bg-[#d2d2d2]'}`}
        >
          {label}
        </button>
      ))}
    </div>
    <div className="flex flex-1 flex-col border-r border-[#7f7f7f] bg-[#f7f7f7]">
      <div className="mt-0.5 mr-0.5 flex h-4 items-center justify-center border-y border-[#c4c4c4]">
        <span className="h-1.5 w-1.5 rounded-full border border-[#888] bg-[#ccc]" />
      </div>
      <div className="mt-1 mr-0.5 flex h-[27px] border-b border-[#a5a5a5]">
        {panelTabs.map((name) => (
          <button
            key={name}
            type="button"
            aria-label={name}
            className={`-mb-px flex w-10 items-center justify-center border-t border-r border-[#8a8a8a] ${name === 'config' ? 'bg-[#f7f7f7]' : 'border-b bg-[#d2d2d2]'}`}
          >
            <Icon name={name} size="h-[18px] w-[18px]" />
          </button>
        ))}
      </div>
      <h2 className="mr-0.5 flex h-8 items-center justify-center border-b border-[#a5a5a5] pl-1.5 text-[11px] font-bold">Configurations</h2>
      <ul className="pt-2.5">
        <li className="flex h-[22px] items-center pl-1">
          <Expander open />
          <span className="ml-3 flex">
            <Icon name="asm" />
          </span>
          <span className="ml-[3px]">lab_pro_dem Configuration(s)</span>
        </li>
        <li className="flex h-[22px] items-center pl-7">
          <Expander />
          <span className="ml-2.5 flex gap-1">
            <Icon name="confItem" />
            <Icon name="check" />
          </span>
          <span className="ml-1">Default [ lab_pro_dem ]</span>
        </li>
      </ul>
      <div className="mt-auto mr-0.5">
        <h2 className="flex h-6 items-center justify-center border-y border-[#a5a5a5] pl-1.5 text-[11px] font-bold">Display States (linked)</h2>
        <div className="flex h-[57px] items-start gap-[3px] pt-0.5 pl-6">
          <Icon name="displayState" />
          <span className="leading-5">Default_Display State-1</span>
        </div>
      </div>
    </div>
    <button
      type="button"
      aria-label="Collapse panel"
      className="absolute top-[175px] -right-2 flex h-[38px] w-[9px] items-center justify-center border border-l-0 border-[#7f7f7f] bg-[#f7f7f7]"
    >
      <span className="h-1.5 w-1.5 rounded-full border border-[#888] bg-[#ccc]" />
    </button>
  </aside>
);

/* ---------- 3D model ---------- */

const Handle = () => (
  <g>
    <path d="M92 150C92 90 145 48 200 45c52 2 82 42 80 95-2 60-60 108-100 112-50-2-88-40-88-102z" fill="#2193bd" />
    <path d="M98 155C98 105 135 66 170 68c45 4 72 45 72 92 0 46-25 84-62 86-50-2-82-40-82-91z" fill="#17678a" />
    <path d="M182 74c-42 20-40 124 20 156 26-10 38-40 38-70 0-42-25-80-58-86z" fill="#eceef4" />
    <path d="M240 118l90 4q20 8 18 28l-6 55-32 10-70-12q-18-40 0-85z" fill="#2193bd" />
    <path d="M300 120q-14 45 2 94M330 122q-16 44-4 90" fill="none" />
    <ellipse cx="262" cy="172" rx="34" ry="38" fill="#1d82aa" />
    <ellipse cx="266" cy="173" rx="22" ry="25" fill="#124f6a" />
    <ellipse cx="266" cy="173" rx="16" ry="19" fill="#2aa0cc" />
    <ellipse cx="272" cy="173" rx="9" ry="12" fill="#0d6b3a" />
    <path d="M318 145q-12 25 0 52l294 44v-56z" fill="#0e7a3e" />
    <path d="M325 150l287 43M325 166l287 44M325 182l287 45" strokeWidth="6" fill="none" stroke="#04331a" />
    <path d="M312 143l18 2q-10 28 2 54l-14 2q-18-30-6-58z" fill="#139a52" />
  </g>
);

const Collar = () => (
  <g>
    <path d="M650 148l45 4q14 70-10 138l-25 8z" fill="#b76670" />
    <ellipse cx="644" cy="222" rx="40" ry="75" fill="#a85862" />
    <ellipse cx="654" cy="222" rx="36" ry="68" fill="#cc7c88" />
  </g>
);

const Bullet = () => (
  <g>
    <path d="M898 330q0-18 16-23l106-102 65-5 6 166-30 12-150-10q-14-10-13-38z" fill="#22a295" />
    <path d="M912 334q4-14 20-18l98-96 55-8v150l-34 12-124-10q-20-8-15-30z" fill="#137a70" />
    <ellipse cx="925" cy="338" rx="10" ry="13" fill="#bfe0dd" />
    <ellipse cx="1045" cy="285" rx="42" ry="78" fill="#8a3d3d" />
    <ellipse cx="1056" cy="286" rx="38" ry="72" fill="#702c2c" />
    <ellipse cx="1066" cy="287" rx="32" ry="58" fill="#984545" />
    <ellipse cx="1076" cy="290" rx="26" ry="46" fill="#6a2a2a" />
    <path d="M1090 178q8-14 26-5l106 90-134-17z" fill="#44598f" />
    <path d="M1104 170l112 94" fill="none" />
    <path d="M1085 248l365 44q40 10 40 58-4 52-40 54l-375-58q-12-46 10-98z" fill="url(#blueBody)" />
    <path d="M1448 293q-30 14-30 58t26 51" fill="none" />
    <ellipse cx="1468" cy="350" rx="19" ry="28" fill="#465c96" />
    <path d="M1053 378l30-46 117 18v10l-124 38q-22 0-23-20z" fill="#44598f" />
    <path d="M1060 385l138-30" fill="none" />
  </g>
);

const Model = () => (
  <svg viewBox="0 0 1568 885" preserveAspectRatio="none" className="absolute bottom-0 left-[513px] h-[295px] w-[540px]" stroke="#0a1a22" strokeWidth="3" strokeLinejoin="round">
    <defs>
      <linearGradient id="teal" x1="0" y1="0" x2="-.15" y2="1">
        <stop offset="0" stopColor="#178a80" />
        <stop offset=".35" stopColor="#2bb5aa" />
        <stop offset="1" stopColor="#128277" />
      </linearGradient>
      <linearGradient id="blueBody" x1="0" y1="0" x2="-.1" y2="1">
        <stop offset="0" stopColor="#3a4c80" />
        <stop offset=".45" stopColor="#506aa6" />
        <stop offset="1" stopColor="#324372" />
      </linearGradient>
      <linearGradient id="yellowBody" x1="0" y1="0" x2="-.1" y2="1">
        <stop offset="0" stopColor="#d8d467" />
        <stop offset=".4" stopColor="#f0ec7e" />
        <stop offset="1" stopColor="#b9b34a" />
      </linearGradient>
      <linearGradient id="yellowDim" x1="0" y1="0" x2="-.2" y2="1">
        <stop offset="0" stopColor="#a89c50" />
        <stop offset=".6" stopColor="#e8dc70" />
        <stop offset="1" stopColor="#e0d264" />
      </linearGradient>
      <linearGradient id="blueDim" x1="0" y1="0" x2="0" y2="1">
        <stop offset="0" stopColor="#4c5568" />
        <stop offset="1" stopColor="#8794b8" />
      </linearGradient>
    </defs>

    {/* floor reflection */}
    <g opacity=".5" stroke="none">
      <path
        fillRule="evenodd"
        d="M218 700c0-60 50-90 108-92 45 2 78 40 76 75l60 5q12 40 0 82l-50 4-52-4c-14 26-34 42-68 42-44-4-74-50-74-112zM290 640c-26 50-14 130 32 160 26-14 35-40 33-68 0-40-25-80-65-92z"
        fill="#5fb4d4"
      />
      <path d="M240 690c4-30 24-46 50-50-26 50-14 120 20 150-40-8-74-50-70-100z" fill="#2f7d9c" />
      <ellipse cx="392" cy="736" rx="26" ry="26" fill="#27718e" />
      <ellipse cx="392" cy="736" rx="16" ry="16" fill="#e8f2f5" />
      <path d="M465 706l170 26v54l-170-26z" fill="#4aa877" />
      <path d="M450 735l185 26" stroke="#1a5e38" strokeWidth="6" />
      <path d="M668 712l120 8-20 118-90-6z" fill="#3cb9ae" />
      <path d="M680 696q40 0 52 16l-24 4q-28 50 0 112l-30 14q-46-14-46-72t48-74z" fill="#c46a78" />
      <path d="M780 712l285 36-140 137H770q-58-80 10-173z" fill="url(#yellowDim)" />
      <path d="M925 885l110-118 40-20 110 6q60 4 80 84l-80 48z" fill="#4a9c90" />
      <path d="M1035 885q-14-80 30-112 60-16 70 20l-60 92z" fill="#b4555a" />
      <path d="M1072 795l70-2 120 14 240 38 18 40h-440z" fill="url(#blueDim)" />
      <path d="M135 885c8-60 60-84 106-84 44 4 70 36 80 72l64 8v4h-90c-20-30-40-48-65-52-30 4-50 24-56 52z" fill="#7cc0d6" />
    </g>

    {/* saddle block between the two tubes */}
    <path d="M728 300l352 40-20 90-320-40z" fill="#158075" />
    <path d="M752 328l278 44v60l-40 6-243-52z" fill="#cfc964" />
    <path d="M992 368v66M1015 372v56" fill="none" />
    <ellipse cx="792" cy="362" rx="27" ry="30" fill="#a8a148" />
    <ellipse cx="798" cy="362" rx="19" ry="23" fill="#dcd66e" />
    <ellipse cx="800" cy="362" rx="11" ry="15" fill="#6a652c" />
    <ellipse cx="962" cy="394" rx="25" ry="27" fill="#a8a148" />
    <ellipse cx="966" cy="394" rx="18" ry="20" fill="#dcd66e" />
    <ellipse cx="968" cy="394" rx="10" ry="13" fill="#6a652c" />

    {/* lower assembly */}
    <g transform="translate(107 222)">
      <Handle />
    </g>
    <g transform="translate(10 206)">
      <Collar />
    </g>
    <path d="M684 375l70 8-12 120-70-15q-34-50 12-113z" fill="url(#teal)" />
    <path d="M750 382l245 48 20 6-110 108-150-24q-60-60-5-138z" fill="url(#yellowBody)" />
    <path d="M1040 415l140-3q14 6 14 24l-60 10z" fill="#137a70" />
    <g transform="translate(11 207)">
      <Bullet />
    </g>

    {/* upper assembly */}
    <Handle />
    <Collar />
    <path d="M672 166l408 58-150 120-260-60q-56-50 2-118z" fill="url(#teal)" />
    <path d="M728 298l180 40v14l-180-42z" fill="#1fa095" />
    <path d="M850 196l30-6q2-14-8-18l-14 0v-16l16-8q20-2 26 12l12-24 34-6q72 16 98 82l-24 4q-90-2-170-20z" fill="#1ea79b" />
    <path d="M955 130q56 22 74 78" fill="none" stroke="#35c4b8" strokeWidth="5" />
    <path d="M910 53l72 10q4 56-36 62l-38-20z" fill="#1ea79b" />
    <path d="M914 62q-2 34 30 60" fill="none" />
    <path d="M858 75l76 14q2 40-4 48 l-6-10-4 14-10-20-6 14-12-20-6 10-14-4q-14-20-14-46z" fill="#26b3a7" />
    <path d="M900 120q18 64-4 120l10 4q28-60 12-120z" fill="#189388" />
    <Bullet />

    {/* selection box */}
    <g fill="none" stroke="#e8861c">
      <path d="M224 122l494 80v94L224 218zM282 100l494 80v92l-494-76zM224 122l58-22M718 202l58-22M718 296l58-24M224 218l58-22" />
    </g>
  </svg>
);

const Triad = () => (
  <svg viewBox="0 0 60 56" className="absolute bottom-10 left-[14px] h-14 w-[60px] overflow-visible" fontFamily="Open Sans, sans-serif" fontSize="10">
    <path d="M27 40V15" stroke="#1c6b22" strokeWidth="3" />
    <path d="M22 21l4-11 5 11z" fill="#2c8a32" />
    <path d="M27 40l16 3" stroke="#b01818" strokeWidth="3" />
    <path d="M40 38l12 6-12 4z" fill="#d22020" />
    <path d="M27 40l-12 5" stroke="#1a1a8c" strokeWidth="3" />
    <path d="M19 41l-12 6 10 4z" fill="#1818c8" />
    <text x="23" y="8" fill="#1c6b22">Y</text>
    <text x="52" y="47" fill="#d22020">X</text>
    <text x="2" y="51" fill="#1a1ac8">Z</text>
  </svg>
);

const viewTools: [string, boolean][] = [
  ['zoomFit', false],
  ['zoomArea', false],
  ['prevView', false],
  ['section', false],
  ['viewOrient', true],
  ['display', true],
  ['eye', true],
  ['ballEdit', false],
  ['ballScene', true],
  ['monitor', true],
];

const taskTabs = ['home', 'books', 'folder', 'palette', 'ball', 'list', 'globe', 'forum'];

const Viewport = () => (
  <main className="relative flex flex-1 items-stretch bg-[linear-gradient(to_bottom,transparent_54%,#fff_71%,#f6f7fa_100%),radial-gradient(ellipse_760px_500px_at_78%_42%,#d7dce8_0%,#dfe3ed_40%,transparent_100%),linear-gradient(to_bottom,#fff_0%,#fff_32%,#e1e4ed_52%,#e1e4ed_58%,#fff_74%)]">
    <div className="flex h-[30px] flex-1 items-center pl-[668px]">
      {viewTools.map(([name, caret]) => (
        <button key={name} type="button" aria-label={name} className={`flex items-center gap-1.5 pl-[3px] ${caret ? 'w-10' : 'w-[26px]'}`}>
          <Icon name={name} />
          {caret && <Caret dim />}
        </button>
      ))}
      <div className="mr-1 ml-auto flex text-[#9a9a9a]">
        <IconButton name="paneL" label="Tile left" className="w-[26px]" />
        <IconButton name="paneR" label="Tile right" className="w-[26px]" />
        <IconButton name="min" label="Minimize document" className="w-[26px]" />
        <IconButton name="restore" label="Restore document" className="w-[26px]" />
        <IconButton name="close" label="Close document" className="w-[26px]" />
      </div>
    </div>
    <div className="w-[5px] border-l border-[#12304a] bg-[#f7f7f7]" />
    <Model />
    <Triad />
    <div className="absolute top-[51px] right-0 flex w-[26px] flex-col border-t border-l border-[#8a8a8a]">
      {taskTabs.map((name) => (
        <button
          key={name}
          type="button"
          aria-label={name}
          className={`flex h-6 items-center justify-center border-b border-[#8a8a8a] ${name === 'books' ? 'bg-[#f7f7f7]' : 'bg-[#d6d6d6]'}`}
        >
          <Icon name={name} size="h-[18px] w-[18px]" />
        </button>
      ))}
    </div>
  </main>
);

/* ---------- motion study ---------- */

const StudyToolbar = () => (
  <div className="flex h-7 shrink-0 items-center border-t border-[#e2e2e6] pb-0.5">
    <div className="relative mt-1 ml-1">
      <select aria-label="Study type" className="h-[22px] w-[101px] appearance-none border border-[#adadad] bg-[#e3e3e3] pl-1">
        <option>Animation</option>
      </select>
      <svg viewBox="0 0 10 6" className="pointer-events-none absolute top-2 right-1 h-1.5 w-2.5" fill="none" stroke="#444">
        <path d="M1 1l4 4 4-4" />
      </svg>
    </div>
    <div className="mx-[3px]">
      <Sep />
    </div>
    <IconButton name="calc" label="Calculate" className="w-7" />
    <IconButton name="playStart" label="Play from start" />
    <IconButton name="play" label="Play" />
    <IconButton name="stop" label="Stop" />
    <input
      type="range"
      aria-label="Playback position"
      defaultValue={0}
      className="ml-1.5 h-5 w-[184px] appearance-none bg-transparent [&::-webkit-slider-runnable-track]:h-1 [&::-webkit-slider-runnable-track]:border [&::-webkit-slider-runnable-track]:border-[#d6d6d6] [&::-webkit-slider-runnable-track]:bg-[#e7eaea] [&::-webkit-slider-thumb]:-mt-2 [&::-webkit-slider-thumb]:h-[18px] [&::-webkit-slider-thumb]:w-[11px] [&::-webkit-slider-thumb]:appearance-none [&::-webkit-slider-thumb]:bg-[#0078d7] [&::-webkit-slider-thumb]:[clip-path:polygon(0_0,100%_0,100%_70%,50%_100%,0_70%)]"
    />
    <div className="ml-2.5 flex h-[22px] w-20 items-center border border-[#7a7a7a] bg-white pl-1">
      <input aria-label="Playback speed" defaultValue="1x" className="w-3.5 bg-[#0078d7] leading-4 text-white" />
      <button type="button" aria-label="Speeds" className="mr-1 ml-auto">
        <svg viewBox="0 0 10 6" className="h-1.5 w-2.5" fill="none" stroke="#444">
          <path d="M1 1l4 4 4-4" />
        </svg>
      </button>
    </div>
    <button type="button" aria-label="Playback mode" className="ml-[7px] flex items-center gap-2">
      <Icon name="arrow" size="h-4 w-4" />
      <Caret />
    </button>
    <IconButton name="film" label="Save animation" className="mr-0.5 ml-[5px] w-7" />
    <Sep />
    <IconButton name="wizard" label="Animation wizard" className="w-[34px]" />
    <Sep />
    <IconButton name="autoKey" label="Autokey" className="w-[30px]" />
    <IconButton name="addKey" label="Add key" className="w-[30px]" />
    <Sep />
    <IconButton name="motor" label="Motor" className="w-9" />
    <IconButton name="spring" label="Spring" className="w-5" />
    <IconButton name="contact" label="Contact" className="w-8" />
    <IconButton name="gravity" label="Gravity" />
    <Sep />
    <IconButton name="gear" label="Study properties" className="w-[35px]" />
    <Sep />
    <button type="button" aria-label="Collapse study" className="mr-3.5 ml-auto">
      <svg viewBox="0 0 12 8" className="h-2 w-3" fill="none" stroke="#777" strokeWidth="2">
        <path d="M1 1l5 5 5-5" />
      </svg>
    </button>
  </div>
);

interface Track {
  label: string;
  icon: string;
  depth: number;
  leaf?: boolean;
  keys: [number, string][];
  bar?: [number, number];
}

const BLUE = '#0000ff';
const GRAY = '#999999';

const tracks: Track[] = [
  { label: 'lab_pro_dem  (Default<Default_Display State-1>)', icon: 'asm', depth: 0, keys: [[0, '#000'], [8, '#000']] },
  { label: 'Orientation and Camera Views', icon: 'telescope', depth: 1, leaf: true, keys: [[0, '#000']] },
  { label: 'Lights, Cameras and Scene', icon: 'lights', depth: 1, keys: [[0, GRAY]] },
  { label: '(-) bad_sub<1> (Default<Default_Display State-1>)', icon: 'asm', depth: 1, keys: [[0, BLUE], [0.2, GRAY], [6, BLUE], [7, BLUE], [8, BLUE]], bar: [6, 7] },
  { label: '(-) End Cap<1> (Default<<Default>_Display State 1>)', icon: 'part', depth: 1, keys: [[0, BLUE], [4, BLUE], [5, BLUE], [8, BLUE]], bar: [4, 5] },
  { label: '(-) End Cap<2> (Default<<Default>_Display State 1>)', icon: 'part', depth: 1, keys: [[0, BLUE], [4, BLUE], [5, BLUE], [8, BLUE]], bar: [4, 5] },
  { label: '(-) Finger Grip<1> (Default<<Default>_Display State 1>)', icon: 'part', depth: 1, keys: [[0, BLUE], [5, BLUE], [6, BLUE], [8, BLUE]], bar: [5, 6] },
  { label: '(-) Arrow<1> (Default<<Default>_Display State 1>)', icon: 'part', depth: 1, keys: [[0, BLUE], [7, BLUE], [8, BLUE]], bar: [7, 8] },
  { label: '(-) Arrow<2> (Default<<Default>_Display State 1>)', icon: 'part', depth: 1, keys: [[0, BLUE], [7, BLUE], [8, BLUE]], bar: [7, 8] },
  { label: '(-) Plunger<1> (Default<<Default>_Display State 1>)', icon: 'part', depth: 1, keys: [[0, BLUE], [2, BLUE], [3, '#55a5ff'], [8, BLUE]], bar: [2, 3] },
  { label: '(-) Plunger<2> (Default<<Default>_Display State 1>)', icon: 'part', depth: 1, keys: [[0, BLUE], [3, BLUE], [8, BLUE]] },
  { label: '(-) Pull Ring<1> (Default<<Default>_Display State 1>)', icon: 'part', depth: 1, keys: [[0, BLUE], [1, BLUE], [8, BLUE]], bar: [0, 1] },
  { label: '(-) Pull Ring<2> (Default<<Default>_Display State 1>)', icon: 'part', depth: 1, keys: [[0, BLUE], [1, BLUE], [2, BLUE], [8, BLUE]], bar: [1, 2] },
  { label: 'Mates', icon: 'mates', depth: 1, keys: [[0, GRAY]] },
];

const SEC = 152;

const MotionTree = () => (
  <div className="flex w-[404px] shrink-0 flex-col">
    <div className="flex h-[30px] items-center justify-end bg-[#cbcbcb] pb-0.5">
      <button type="button" aria-label="No filter" className="mr-0.5 flex h-[26px] w-[26px] items-center justify-center border border-[#777] bg-[#b0b0b0]">
        <Icon name="funnel" />
      </button>
      {['camcorder', 'gear', 'selected', 'results'].map((name) => (
        <button key={name} type="button" aria-label={`Filter ${name}`} className={`flex w-[27px] items-center justify-center ${name === 'results' ? 'opacity-30' : ''}`}>
          <Svg>
            {name === 'selected' && (
              <>
                <path d="M1 5h12l-4 5v9H6v-9z" fill="#c48be0" stroke="#4b1f66" />
                <path d="M13 1v11l2-2 2 4 1-1-1-3h2z" fill="#fff" stroke={K} />
              </>
            )}
            {name === 'results' && <path d="M1 1h13v15H1zM4 5v7h7M5 9l3-2 3 2" stroke={K} />}
            {icons[name]}
            {name !== 'selected' && badge}
          </Svg>
        </button>
      ))}
    </div>
    <ul className="flex-1 pt-px text-[12px]">
      {tracks.map((t) => (
        <li key={t.label} className={`flex h-[22px] items-center ${t.depth ? 'pl-[30px]' : 'pl-1.5'}`}>
          <span className="flex w-[17px] shrink-0">{!t.leaf && <Expander open={!t.depth} />}</span>
          <span
            className={`flex h-[21px] items-center gap-[3px] border pr-px pl-0.5 whitespace-pre ${t.label.includes('Plunger<1>') ? 'border-[#8a8a8a] bg-white' : 'border-transparent'}`}
          >
            <Icon name={t.icon} size="h-[18px] w-[18px]" />
            {t.label}
          </span>
        </li>
      ))}
    </ul>
    <div className="h-[18px] bg-[#cbcbcb]" />
  </div>
);

const Ruler = () => (
  <div className="relative h-[30px] overflow-hidden bg-[#cbcbcb]">
    <div className="absolute inset-y-0 left-[50px] bg-[#ffff7f]" style={{ width: 8 * SEC }} />
    {Array.from({ length: 96 }, (_, i) => {
      const major = i % 10 === 0;
      return (
        <div
          key={i}
          className={`absolute bottom-px w-px bg-[#5f5f38] ${major ? 'top-[3px]' : i % 5 === 0 ? 'h-3' : 'h-2'}`}
          style={{ left: 50 + Math.round((i * SEC) / 10) }}
        >
          {major && <span className="absolute -top-[3px] left-0.5 text-[12px] leading-5 font-medium whitespace-nowrap text-[#5f5f48]">{i / 10} sec</span>}
        </div>
      );
    })}
  </div>
);

const TrackRow = ({ track, index }: { track: Track; index: number }) => (
  <div className="relative ml-[50px] h-[22px]">
    {index === 0 && <div className="absolute top-2.5 left-0 h-px bg-black" style={{ width: 8 * SEC }} />}
    {track.label === 'Mates' && <div className="absolute top-[3px] left-0 h-[15px] bg-[#ccac4a]" style={{ width: 8 * SEC }} />}
    {track.bar && (
      <div className="absolute top-2 h-[5px] bg-[#ffa30a]" style={{ left: track.bar[0] * SEC, width: (track.bar[1] - track.bar[0]) * SEC }} />
    )}
    {track.keys.map(([t, color]) => (
      <svg key={t} viewBox="0 0 10 19" className="absolute top-px h-[19px] w-2.5 -translate-x-1/2" style={{ left: t * SEC }}>
        <path d="M5 0l5 9.500-5 9.500-5-9.500z" fill={color} stroke={color === BLUE ? '#00004d' : 'none'} />
      </svg>
    ))}
  </div>
);

const Timeline = () => (
  <div className="flex min-w-0 flex-1 flex-col">
    <Ruler />
    <div className="relative flex-1 bg-[#ebebeb] pt-px">
      {Array.from({ length: 9 }, (_, i) => (
        <div key={i} className="absolute inset-y-0 w-px bg-[#bdbdbd]" style={{ left: 50 + (i + 1) * SEC }} />
      ))}
      {tracks.map((t, i) => (
        <TrackRow key={t.label} track={t} index={i} />
      ))}
      <div className="absolute -top-[30px] bottom-0 left-[49px] w-0.5 bg-[#808080]" />
      <div className="absolute right-0 bottom-0 flex h-[26px] w-[81px] items-center bg-[#cbcbcb]">
        <IconButton name="zoomFit" label="Zoom to fit" />
        <IconButton name="zoomIn" label="Zoom in" />
        <IconButton name="zoomOut" label="Zoom out" />
      </div>
    </div>
    <div className="flex h-[18px] items-center border-t border-white bg-[#f0f0f0]">
      <button type="button" aria-label="Scroll left" className="flex w-[17px] justify-center">
        <svg viewBox="0 0 8 10" className="h-2.5 w-2" fill="none" stroke="#555" strokeWidth="1.800">
          <path d="M6 1L2 5l4 4" />
        </svg>
      </button>
      <div className="h-[15px] w-[40%] bg-[#cdcdcd]" />
      <button type="button" aria-label="Scroll right" className="ml-auto flex w-[17px] justify-center">
        <svg viewBox="0 0 8 10" className="h-2.5 w-2" fill="none" stroke="#555" strokeWidth="1.800">
          <path d="M2 1l4 4-4 4" />
        </svg>
      </button>
    </div>
  </div>
);

const MenuItem = ({ icon, label, disabled, sub }: { icon?: string; label: string; disabled?: boolean; sub?: boolean }) => (
  <button type="button" role="menuitem" disabled={disabled} className={`flex h-6 w-full items-center ${disabled ? 'text-[#b0b0b0]' : 'text-black'}`}>
    <span className="flex w-[33px] items-center justify-center">{icon && <Icon name={icon} />}</span>
    <span>{label}</span>
    {sub && (
      <span className="mr-2.5 ml-auto flex">
        <Expander />
      </span>
    )}
  </button>
);

const ContextMenu = () => (
  <div role="menu" className="absolute top-[264px] left-[917px] z-20 w-[200px] border border-[#a0a0a0] bg-[#f7f7f7] py-0.5 shadow-[3px_3px_3px_rgba(0,0,0,0.5)]">
    <MenuItem icon="keyTime" label="Edit Key Point Time" />
    <MenuItem icon="keyAdd" label="Replace Key" />
    <div className="ml-[33px] h-px bg-[#b5b5b5]" />
    <MenuItem icon="cut" label="Cut" />
    <MenuItem icon="copy" label="Copy" />
    <MenuItem icon="paste" label="Paste" disabled />
    <MenuItem icon="del" label="Delete" />
    <div className="mt-px ml-[33px] h-px bg-[#b5b5b5]" />
    <MenuItem label="Select All" />
    <div className="mt-0.5">
      <MenuItem label="Suppress Key" />
    </div>
    <MenuItem label="Interpolation mode" sub />
  </div>
);

const StudyTabs = () => (
  <div className="flex h-4 shrink-0 items-stretch border-t border-[#7f7f7f] leading-[13px]">
    <div className="flex w-[67px] bg-[#b5b5b5] pl-[3px]">
      {['M4 2v8M10 2L6 6l4 4z', 'M8 2L4 6l4 4z', 'M4 2l4 4-4 4z', 'M8 2v8M2 2l4 4-4 4z'].map((d) => (
        <button key={d} type="button" aria-label="Scroll tabs" className="flex w-4 items-center justify-center border-r border-[#8a8a8a]">
          <svg viewBox="0 0 12 12" className="h-3 w-3" fill="#8a8a8a" stroke="#8a8a8a">
            <path d={d} />
          </svg>
        </button>
      ))}
    </div>
    <button type="button" className="w-[57px] border-r border-[#8a8a8a] bg-[#d2d2d2] pb-0.5 pl-1.5">Model</button>
    <button type="button" className="w-[101px] border-r border-[#8a8a8a] bg-[#d2d2d2] pb-0.5">Motion Study 1</button>
    <button type="button" className="w-[108px] border-r border-[#8a8a8a] pb-0.5 pl-1.5 text-left font-bold">Motion Study 2</button>
  </div>
);

const FilterBar = () => (
  <div className="flex h-[33px] shrink-0 items-center border-b border-[#7f7f7f] pl-1">
    <div className="mr-[7px] h-7 border-l-2 border-dotted border-[#888]" />
    <IconButton name="filterOff" label="Clear filters" />
    <IconButton name="filterStackOff" label="Toggle filters" />
    <IconButton name="filterStack" label="Select all filters" />
    <button type="button" aria-label="Select" className="flex h-[25px] w-[41px] items-center border border-[#999] bg-white">
      <span className="flex h-full w-7 items-center justify-center bg-[#b5b5b5]">
        <Icon name="cursor" />
      </span>
      <span className="flex flex-1 justify-center">
        <Caret />
      </span>
    </button>
    <IconButton name="selGray" label="Select over geometry" className="w-[30px]" />
    <div className="mr-1.5">
      <Sep />
    </div>
    {filterGlyphs.map((glyph, i) => (
      <button key={i} type="button" aria-label={`Filter ${i + 1}`} className="flex w-[27px] items-center justify-center">
        <Svg>
          {glyph}
          {badge}
        </Svg>
      </button>
    ))}
    <div className="ml-1">
      <Sep />
    </div>
  </div>
);

const StatusBar = () => (
  <footer className="flex h-5 shrink-0 items-stretch border-b-2 border-[#6b2a1e] leading-[18px]">
    <span className="flex-1 pl-px">SOLIDWORKS Premium 2017 x64 Edition</span>
    <span className="border-r border-[#c8c8c8] pr-1.5">Under Defined</span>
    <span className="ml-[7px] border-x border-[#c8c8c8] pr-2 pl-1">Editing Assembly</span>
    <button type="button" className="ml-4 flex w-[158px] items-center gap-4 border-l border-[#c8c8c8] pl-7">
      Custom
      <Caret up />
    </button>
    <span className="flex items-center pr-1">
      <Icon name="tag" size="h-4 w-4" />
    </span>
  </footer>
);

export default function App() {
  return (
    <div className="flex h-screen min-h-[900px] min-w-[1300px] flex-col overflow-hidden bg-[#f7f7f7] font-['Open_Sans',sans-serif] text-[11px] text-[#111]">
      <TitleBar />
      <div className="flex h-8 shrink-0 items-center border-b border-[#7f7f7f] pb-0.5 pl-1">
        <div className="mr-2 h-7 border-l-2 border-dotted border-[#888]" />
        <IconButton name="camera" label="Capture image" />
        <IconButton name="record" label="Record video" />
        <IconButton name="recStop" label="Stop recording" />
        <div className="ml-[5px] h-full w-px bg-[#7f7f7f]" />
      </div>
      <Ribbon />
      <div className="flex min-h-0 flex-1">
        <ConfigPanel />
        <Viewport />
      </div>
      <section className="relative flex h-[438px] shrink-0 flex-col">
        <StudyToolbar />
        <div className="mr-[7px] ml-[3px] flex flex-1">
          <MotionTree />
          <div className="w-1 border-x border-[#50607a] bg-white" />
          <Timeline />
        </div>
        <div className="absolute inset-y-0 left-0 w-0.5 bg-[#9cb4bd]" />
        <div className="absolute inset-y-0 right-1 w-px bg-[#12304a]" />
        <ContextMenu />
      </section>
      <StudyTabs />
      <FilterBar />
      <StatusBar />
    </div>
  );
}
